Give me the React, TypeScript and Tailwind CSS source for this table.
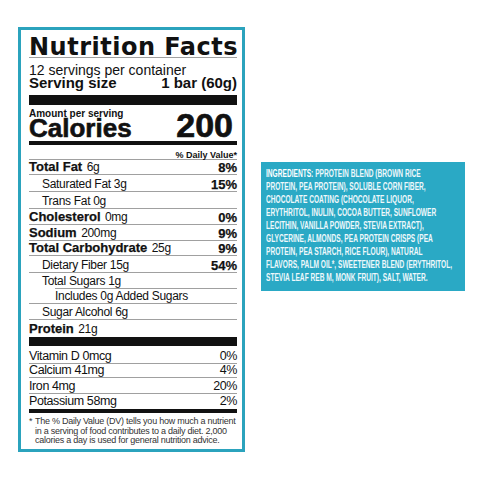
import React from "react";

type Row = {
  label: string;
  amount?: string;
  dv?: string;
  bold?: boolean;
  indent?: 0 | 1 | 2;
  h: string;
  line?: "full" | "indent" | "none";
};

// row heights include the 1px rule at the bottom
const rows: Row[] = [
  { label: "Total Fat", amount: "6g", dv: "8%", bold: true, h: "h-[15px]" },
  { label: "Saturated Fat 3g", dv: "15%", indent: 1, h: "h-[17px]" },
  { label: "Trans Fat 0g", indent: 1, h: "h-[17px]" },
  { label: "Cholesterol", amount: "0mg", dv: "0%", bold: true, h: "h-[16px]" },
  { label: "Sodium", amount: "200mg", dv: "9%", bold: true, h: "h-[16px]" },
  { label: "Total Carbohydrate", amount: "25g", dv: "9%", bold: true, h: "h-[15px]" },
  { label: "Dietary Fiber 15g", dv: "54%", indent: 1, h: "h-[17px]" },
  { label: "Total Sugars 1g", indent: 1, h: "h-[16px]", line: "indent" },
  { label: "Includes 0g Added Sugars", indent: 2, h: "h-[15px]" },
  { label: "Sugar Alcohol 6g", indent: 1, h: "h-[16px]" },
  { label: "Protein", amount: "21g", bold: true, h: "h-[17px]", line: "none" },
];

const vitamins: { label: string; dv: string; h: string; last?: boolean }[] = [
  { label: "Vitamin D 0mcg", dv: "0%", h: "h-[18px]" },
  { label: "Calcium 41mg", dv: "4%", h: "h-[14px]" },
  { label: "Iron 4mg", dv: "20%", h: "h-[16px]" },
  { label: "Potassium 58mg", dv: "2%", h: "h-[15px]", last: true },
];

const ingredients = [
  "PROTEIN, PEA PROTEIN), SOLUBLE CORN FIBER,",
  "CHOCOLATE COATING (CHOCOLATE LIQUOR,",
  "ERYTHRITOL, INULIN, COCOA BUTTER, SUNFLOWER",
  "LECITHIN, VANILLA POWDER, STEVIA EXTRACT),",
  "GLYCERINE, ALMONDS, PEA PROTEIN CRISPS (PEA",
  "PROTEIN, PEA STARCH, RICE FLOUR), NATURAL",
  "FLAVORS, PALM OIL*, SWEETENER BLEND (ERYTHRITOL,",
  "STEVIA LEAF REB M, MONK FRUIT), SALT, WATER.",
];

function NutrientRow({ r }: { r: Row }) {
  const pad = r.indent === 2 ? "pl-[26px]" : r.indent === 1 ? "pl-[13px]" : "";
  return (
    <div className={`relative flex items-end justify-between ${r.h}`}>
      <div className={`${pad} pb-[1px] leading-none whitespace-nowrap`}>
        {r.bold ? (
          <>
            <span className="text-[13px] font-bold [-webkit-text-stroke:0.25px_#111]">{r.label}</span>{" "}
            <span className="text-[12px] tracking-[-0.3px]">{r.amount}</span>
          </>
        ) : (
          <span className="text-[12px] tracking-[-0.3px]">{r.label}</span>
        )}
      </div>
      {r.dv && (
        <div className="pb-[1px] text-[13px] font-bold leading-none [-webkit-text-stroke:0.25px_#111]">{r.dv}</div>
      )}
      {r.line !== "none" && (
        <div
          className={`absolute bottom-0 right-0 h-px bg-[#a0a0a0] ${
            r.line === "indent" ? "left-[26px]" : "left-0"
          }`}
        />
      )}
    </div>
  );
}

export default function App() {
  return (
    <div className="flex h-[480px] w-[480px] items-start bg-white font-['Liberation_Sans',Arial,sans-serif] text-[#111]">
      <section className="ml-[18px] mt-[27px] h-[425px] w-[227px] shrink-0 border-[3px] border-[#2ba3bd] pl-[8px] pr-[5px]">
        <h1 className="mt-[5px] h-[22px] font-['DejaVu_Sans',sans-serif] text-[24px] font-bold leading-[25px] tracking-[0.5px] whitespace-nowrap">
          Nutrition Facts
        </h1>
        <div className="h-px bg-[#a0a0a0]" />
        <div className="mt-[6px] text-[14px] leading-[12px] whitespace-nowrap">12 servings per container</div>
        <div className="flex h-[13px] justify-between text-[15px] leading-[13px] font-bold">
          <span>Serving size</span>
          <span>1 bar (60g)</span>
        </div>
        <div className="mt-[6px] h-[10px] bg-[#111]" />
        <div className="mt-[4px] text-[10px] font-bold leading-[9px]">Amount per serving</div>
        <div className="flex h-[20px] items-end justify-between">
          <span className="text-[26px] font-bold leading-[20px] [-webkit-text-stroke:0.6px_#111]">Calories</span>
          <span className="mr-[4px] text-[34px] font-bold leading-[26px] [-webkit-text-stroke:0.7px_#111]">200</span>
        </div>
        <div className="mt-[3px] h-[4px] bg-[#111]" />
        <div className="mt-[6px] text-right text-[9px] font-bold leading-[8px]">% Daily Value*</div>
        <div className="h-px bg-[#a0a0a0]" />
        {rows.map((r) => (
          <NutrientRow key={r.label} r={r} />
        ))}
        <div className="h-[9px] bg-[#111]" />
        {vitamins.map((v) => (
          <div key={v.label} className={`relative flex items-end justify-between ${v.h}`}>
            <span className="pb-[2px] text-[12.5px] leading-none tracking-[-0.4px]">{v.label}</span>
            <span className="pb-[2px] text-[12.5px] leading-none tracking-[-0.4px]">{v.dv}</span>
            {!v.last && <div className="absolute bottom-0 left-0 right-0 h-px bg-[#a0a0a0]" />}
          </div>
        ))}
        <div className="h-[4px] bg-[#111]" />
        <div className="mt-[4px] flex text-[9px] leading-[9.5px] text-[#333] tracking-[-0.25px]">
          <span className="w-[6px] shrink-0">*</span>
          <div className="whitespace-nowrap">
            <div>The % Daily Value (DV) tells you how much a nutrient</div>
            <div>in a serving of food contributes to a daily diet. 2,000</div>
            <div>calories a day is used for general nutrition advice.</div>
          </div>
        </div>
      </section>
      <section className="ml-[16px] mt-[162px] h-[129px] w-[204px] shrink-0 overflow-hidden bg-[#2aa9c5] pl-[5px] pt-[6px]">
        <div className="w-[300px] origin-top-left scale-x-[0.66] text-[10px] font-bold leading-[12.93px] text-[#eef8fb]">
          <div className="whitespace-nowrap">
            <span className="text-white">INGREDIENTS:</span> PPROTEIN BLEND (BROWN RICE
          </div>
          {ingredients.map((l) => (
            <div key={l} className="whitespace-nowrap">
              {l}
            </div>
          ))}
        </div>
      </section>
    </div>
  );
}
